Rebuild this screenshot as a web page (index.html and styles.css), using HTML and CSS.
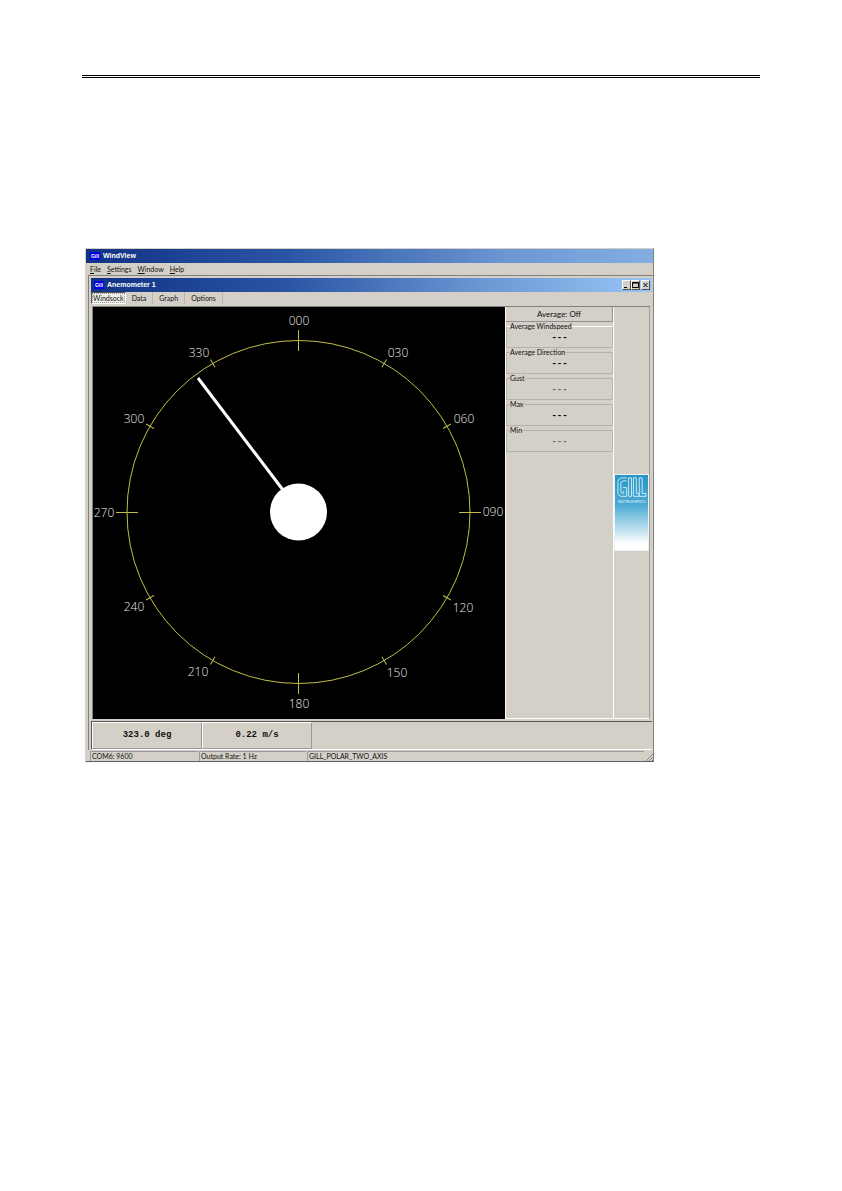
FILE: index.html
```html
<!DOCTYPE html>
<html lang="en">
<head>
<meta charset="utf-8">
<title>WindView</title>
<link rel="stylesheet" href="styles.css">
</head>
<body>
<main class="page">
  <hr class="page-rule">
  <section class="app">
    <header class="titlebar"><span class="badge">Gill</span><span>WindView</span></header>
    <nav class="menu">
      <button type="button"><u>F</u>ile</button>
      <button type="button"><u>S</u>ettings</button>
      <button type="button"><u>W</u>indow</button>
      <button type="button"><u>H</u>elp</button>
    </nav>
    <section class="child">
      <header class="titlebar child-title">
        <span class="badge">Gill</span><span>Anemometer 1</span>
        <span class="controls">
          <button type="button" aria-label="Minimize"><svg viewBox="0 0 7 8"><path d="M1 6.5h3" /></svg></button>
          <button type="button" aria-label="Maximize"><svg viewBox="0 0 7 8"><path d="M.5 1.5h6v5h-6zM.5 2h6" /></svg></button>
          <button type="button" class="close" aria-label="Close"><svg viewBox="0 0 7 8"><path d="M1.5 2l4 4M5.5 2l-4 4" /></svg></button>
        </span>
      </header>
      <nav class="tabs">
        <button type="button" class="tab active">Windsock</button>
        <button type="button" class="tab">Data</button>
        <button type="button" class="tab">Graph</button>
        <button type="button" class="tab">Options</button>
      </nav>
      <div class="work">
        <svg class="dial" viewBox="0 0 412 412" role="img" aria-label="Wind direction">
          <circle class="ring" cx="205.5" cy="205" r="171.5" />
          <g class="ticks">
            <path d="M205.5 23v21M205.5 366v21M23 205.5h22M366 205.5h22" />
            <path d="M205.5 29v9" transform="rotate(30 205.5 205)" />
            <path d="M205.5 29v9" transform="rotate(60 205.5 205)" />
            <path d="M205.5 29v9" transform="rotate(120 205.5 205)" />
            <path d="M205.5 29v9" transform="rotate(150 205.5 205)" />
            <path d="M205.5 29v9" transform="rotate(210 205.5 205)" />
            <path d="M205.5 29v9" transform="rotate(240 205.5 205)" />
            <path d="M205.5 29v9" transform="rotate(300 205.5 205)" />
            <path d="M205.5 29v9" transform="rotate(330 205.5 205)" />
          </g>
          <path class="needle" d="M105 71L190 183" />
          <circle class="hub" cx="205.5" cy="205" r="28.5" />
          <g class="labels">
            <text x="206" y="18">000</text>
            <text x="305" y="50">030</text>
            <text x="371" y="116">060</text>
            <text x="400" y="209">090</text>
            <text x="370" y="305">120</text>
            <text x="304" y="370">150</text>
            <text x="206" y="401">180</text>
            <text x="105" y="369">210</text>
            <text x="41" y="304">240</text>
            <text x="11" y="210">270</text>
            <text x="41" y="116">300</text>
            <text x="106" y="50">330</text>
          </g>
        </svg>
        <aside class="stats">
          <button type="button" class="average">Average: Off</button>
          <fieldset class="stat first"><legend>Average Windspeed</legend><output>---</output></fieldset>
          <fieldset class="stat"><legend>Average Direction</legend><output>---</output></fieldset>
          <fieldset class="stat dim"><legend>Gust</legend><output>---</output></fieldset>
          <fieldset class="stat"><legend>Max</legend><output>---</output></fieldset>
          <fieldset class="stat dim"><legend>Min</legend><output>---</output></fieldset>
        </aside>
        <aside class="brand">
          <div class="logo">
            <svg viewBox="0 0 34 24" aria-hidden="true">
              <path d="M12 3H8Q3 3 3 8v9q0 5 4 5h5v-9H8M12 6H9Q6 6 6 9v7q0 3 2 3h1v-3M14 3h3v19h-3zM19 3h3v16h3v3h-6zM25 3h3v16h4v3h-7z" />
            </svg>
            <span>INSTRUMENTS</span>
          </div>
        </aside>
      </div>
      <div class="readings">
        <output class="reading">323.0 deg</output>
        <output class="reading">0.22 m/s</output>
      </div>
    </section>
    <footer class="status">
      <span>COM6: 9600</span>
      <span>Output Rate: 1 Hz</span>
      <span>GILL_POLAR_TWO_AXIS</span>
      <svg class="grip" viewBox="0 0 8 8" aria-hidden="true"><path d="M1 8L8 1M4 8L8 4M7 8L8 7" /></svg>
    </footer>
  </section>
</main>
</body>
</html>
```
FILE: styles.css
```css
* { box-sizing: border-box; }

body {
  margin: 0;
  background: #fff;
  color: #111;
  font: 7px/8px Lato, "Liberation Sans", sans-serif;
}

button {
  margin: 0;
  padding: 0;
  border: 0;
  background: none;
  color: inherit;
  font: inherit;
}

.page { padding: 75px 82px; }

.page-rule {
  margin: 0 0 170px;
  border: 0;
  border-top: 3px double #000;
}

.app {
  max-width: 569px;
  margin-left: 3px;
  border: 1px solid #d4d0c8;
  border-right-color: #808080;
  border-bottom-color: #606060;
  background: #d4d0c8;
}

.titlebar {
  display: flex;
  align-items: center;
  gap: 3px;
  height: 14px;
  padding-left: 4px;
  background: linear-gradient(90deg, #123284, #2a55a4 35%, #6c98d4 75%, #84aee2);
  color: #fff;
  font-family: "Liberation Sans", Arial, sans-serif;
  font-weight: bold;
}

.badge {
  width: 10px;
  background: #0000e8;
  font-size: 5px;
  text-align: center;
}

.menu {
  display: flex;
  gap: 6px;
  height: 12px;
  padding: 0 4px;
}

.child {
  margin-left: 2px;
  padding: 2px 1px 0 2px;
  border: 1px solid #808080;
  border-width: 1px 0 0 1px;
}

.child-title {
  padding: 0 2px 0 3px;
  background: linear-gradient(90deg, #123284, #2a55a4 35%, #6c98d4 70%, #98c4f4);
}

.controls {
  display: flex;
  margin-left: auto;
}

.controls button {
  width: 9px;
  height: 10px;
  border: 1px solid #fff;
  border-right-color: #505050;
  border-bottom-color: #505050;
  background: #d4d0c8;
}

.controls .close { margin-left: 1px; }

.controls svg { display: block; width: 100%; height: 100%; }

.controls path { fill: none; stroke: #000; stroke-width: 1; }

.tabs { display: flex; height: 14px; padding-bottom: 2px; }

.tab {
  padding: 0 6px;
  border-right: 1px solid #bab6ae;
}

.tab.active {
  padding: 0 1px;
  border: 1px solid #555;
  border-right-color: #fff;
  border-bottom-color: #fff;
  background: #f0eeea;
  outline: 1px dotted #999;
  outline-offset: -2px;
}

.work {
  display: flex;
  margin: 0 2px 2px 1px;
  border-top: 1px solid #808080;
  border-left: 1px solid #808080;
}

.dial {
  flex: 1;
  min-width: 0;
  background: #000;
}

.ring, .ticks { fill: none; stroke: #c2bd48; stroke-width: 1; }

.needle { stroke: #fff; stroke-width: 3; }

.hub { fill: #fff; }

.labels {
  fill: #e8e8e8;
  font: 300 12px "Open Sans", sans-serif;
  text-anchor: middle;
}

.stats {
  display: flex;
  flex-direction: column;
  width: 109px;
  border-left: 1px solid #fff;
  border-right: 1px solid #fff;
  border-bottom: 1px solid #fff;
}

.average {
  height: 15px;
  border-bottom: 1px solid #909090;
  border-right: 1px solid #909090;
  font-size: 8px;
}

.stat {
  height: 26px;
  margin: 0;
  padding: 0;
  border: 1px solid #b4b2ac;
}

.stat.first { border-top-color: #fff; }

.stat legend {
  margin-left: 3px;
  padding: 0;
}

.stat output {
  display: block;
  padding-top: 4px;
  color: #000;
  font: bold 9px/8px "Liberation Mono", monospace;
  text-align: center;
}

.stat.dim output { color: #666; }

.brand {
  display: flex;
  flex-direction: column;
  justify-content: center;
  width: 36px;
  border-right: 1px solid #a09e98;
  border-bottom: 1px solid #fff;
}

.logo {
  height: 77px;
  border: 1px solid #e8f4f8;
  background: linear-gradient(#2a95c4, #4cabd2 40%, #a4d4e8 65%, #fff 92%);
  color: #e0f4fc;
  font-size: 4px;
  line-height: 8px;
  text-align: center;
}

.logo svg { display: block; width: 100%; height: auto; }

.logo path { fill: none; stroke: #c8ecf8; stroke-width: 1; }

.readings {
  display: flex;
  height: 29px;
  border-top: 1px solid #555;
  border-left: 1px solid #555;
  border-bottom: 1px solid #fff;
}

.reading {
  width: 110px;
  border: 1px solid #fff;
  border-right-color: #999;
  border-bottom-color: #999;
  color: #111;
  font: bold 9px/25px "Liberation Mono", monospace;
  text-align: center;
}

.status {
  display: grid;
  grid-template-columns: 108px 107px 1fr 8px;
  gap: 1px;
  height: 10px;
  margin-top: 1px;
  padding-left: 4px;
}

.status span {
  padding-left: 1px;
  border-top: 1px solid #999;
  border-left: 1px solid #999;
  white-space: nowrap;
}

.grip { width: 8px; height: 8px; align-self: end; fill: none; stroke: #888; }
```
